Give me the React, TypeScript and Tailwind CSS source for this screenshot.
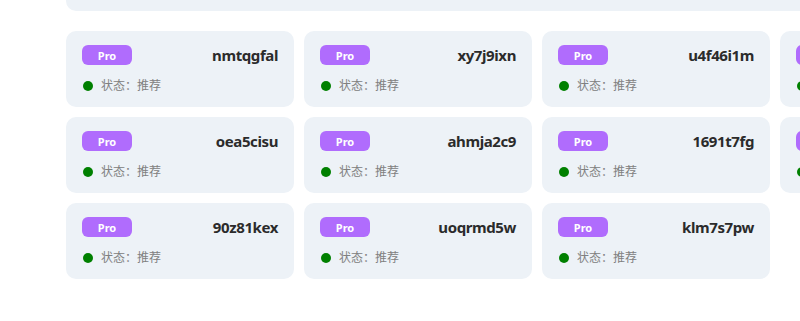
import React from "react";

const rows = [
  ["nmtqgfal", "xy7j9ixn", "u4f46i1m", "aaaaaaa"],
  ["oea5cisu", "ahmja2c9", "1691t7fg", "bbbbbbb"],
  ["90z81kex", "uoqrmd5w", "klm7s7pw"],
];

function Card({ name }: { name: string }) {
  return (
    <div className="w-[228px] h-[76px] shrink-0 rounded-[10px] bg-[#edf2f7] px-4 pt-[14px]">
      <div className="flex items-center justify-between h-5">
        <span className="w-[50px] h-5 rounded-[6px] bg-[#b06cfd] text-white text-[11px] font-bold flex items-center justify-center leading-none">
          Pro
        </span>
        <span className="text-[15px] font-bold text-[#2b2b2b] leading-none tracking-[-0.4px]">{name}</span>
      </div>
      <div className="flex items-center mt-[16px] h-[10px]">
        <span className="w-[10px] h-[10px] rounded-full bg-[#008000] ml-px" />
        <span className="ml-2 text-[12px] text-[#808080] leading-none">状态：推荐</span>
      </div>
    </div>
  );
}

export default function App() {
  return (
    <div
      className="w-[800px] h-[321px] overflow-hidden bg-white"
      style={{ fontFamily: '"Noto Sans", "Noto Sans CJK SC", sans-serif' }}
    >
      <div className="ml-[66px] w-[800px] h-[11px] bg-[#edf2f7] rounded-b-[10px]" />
      <div className="ml-[66px] mt-5 flex flex-col gap-[10px]">
        {rows.map((r, i) => (
          <div key={i} className="flex gap-[10px]">
            {r.map((n) => (
              <Card key={n} name={n} />
            ))}
          </div>
        ))}
      </div>
    </div>
  );
}
